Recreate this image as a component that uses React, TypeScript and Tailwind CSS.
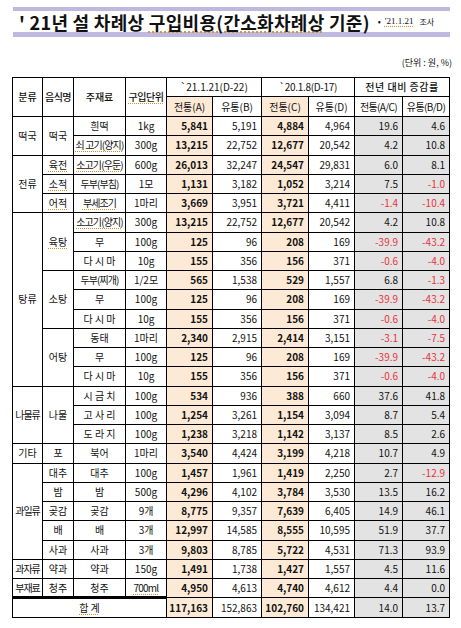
import React from "react";

type Row = {
  cat?: [string, number];
  food?: [string, number, boolean?];
  ing: string;
  ingTight?: boolean;
  ingU?: boolean;
  unit: string;
  v: [string, string, string, string, string, string];
};

const rows: Row[] = [
  { cat: ["떡국", 2], food: ["떡국", 2], ing: "흰떡", unit: "1kg", v: ["5,841", "5,191", "4,884", "4,964", "19.6", "4.6"] },
  { ing: "쇠 고기(양지)", ingTight: true, ingU: true, unit: "300g", v: ["13,215", "22,752", "12,677", "20,542", "4.2", "10.8"] },
  { cat: ["전류", 3], food: ["육전", 1, true], ing: "소고기(우둔)", ingTight: true, ingU: true, unit: "600g", v: ["26,013", "32,247", "24,547", "29,831", "6.0", "8.1"] },
  { food: ["소적", 1, true], ing: "두부(부침)", ingTight: true, unit: "1모", v: ["1,131", "3,182", "1,052", "3,214", "7.5", "-1.0"] },
  { food: ["어적", 1, true], ing: "부세조기", ingTight: true, ingU: true, unit: "1마리", v: ["3,669", "3,951", "3,721", "4,411", "-1.4", "-10.4"] },
  { cat: ["탕류", 9], food: ["육탕", 3, true], ing: "소고기(양지)", ingTight: true, ingU: true, unit: "300g", v: ["13,215", "22,752", "12,677", "20,542", "4.2", "10.8"] },
  { ing: "무", unit: "100g", v: ["125", "96", "208", "169", "-39.9", "-43.2"] },
  { ing: "다 시 마", unit: "10g", v: ["155", "356", "156", "371", "-0.6", "-4.0"] },
  { food: ["소탕", 3], ing: "두부(찌개)", ingTight: true, unit: "1/2모", v: ["565", "1,538", "529", "1,557", "6.8", "-1.3"] },
  { ing: "무", unit: "100g", v: ["125", "96", "208", "169", "-39.9", "-43.2"] },
  { ing: "다 시 마", unit: "10g", v: ["155", "356", "156", "371", "-0.6", "-4.0"] },
  { food: ["어탕", 3], ing: "동태", unit: "1마리", v: ["2,340", "2,915", "2,414", "3,151", "-3.1", "-7.5"] },
  { ing: "무", unit: "100g", v: ["125", "96", "208", "169", "-39.9", "-43.2"] },
  { ing: "다 시 마", unit: "10g", v: ["155", "356", "156", "371", "-0.6", "-4.0"] },
  { cat: ["나물류", 3], food: ["나물", 3], ing: "시 금 치", unit: "100g", v: ["534", "936", "388", "660", "37.6", "41.8"] },
  { ing: "고 사 리", unit: "100g", v: ["1,254", "3,261", "1,154", "3,094", "8.7", "5.4"] },
  { ing: "도 라 지", unit: "100g", v: ["1,238", "3,218", "1,142", "3,137", "8.5", "2.6"] },
  { cat: ["기타", 1], food: ["포", 1], ing: "북어", unit: "1마리", v: ["3,540", "4,424", "3,199", "4,218", "10.7", "4.9"] },
  { cat: ["과일류", 5], food: ["대추", 1], ing: "대추", unit: "100g", v: ["1,457", "1,961", "1,419", "2,250", "2.7", "-12.9"] },
  { food: ["밤", 1], ing: "밤", unit: "500g", v: ["4,296", "4,102", "3,784", "3,530", "13.5", "16.2"] },
  { food: ["곶감", 1], ing: "곶감", unit: "9개", v: ["8,775", "9,357", "7,639", "6,405", "14.9", "46.1"] },
  { food: ["배", 1], ing: "배", unit: "3개", v: ["12,997", "14,585", "8,555", "10,595", "51.9", "37.7"] },
  { food: ["사과", 1], ing: "사과", unit: "3개", v: ["9,803", "8,785", "5,722", "4,531", "71.3", "93.9"] },
  { cat: ["과자류", 1], food: ["약과", 1], ing: "약과", unit: "150g", v: ["1,491", "1,738", "1,427", "1,557", "4.5", "11.6"] },
  { cat: ["부재료", 1], food: ["청주", 1], ing: "청주", unit: "700ml", v: ["4,950", "4,613", "4,740", "4,612", "4.4", "0.0"] },
];

const U = "underline decoration-dotted decoration-[#d9902a] underline-offset-2";
const cell = "border border-black p-0 text-center align-middle whitespace-nowrap";
const peach = "bg-[#fdead6]";
const gray = "bg-[#e3e3e3]";

function Num({ v, cls, bold }: { v: string; cls: string; bold?: boolean }) {
  const red = v.startsWith("-");
  return (
    <td
      className={`border border-black p-0 pr-[4px] text-right align-middle whitespace-nowrap ${cls} ${bold ? "font-bold" : ""} ${red ? "text-[#e8323c]" : "text-[#111]"}`}
    >
      {v}
    </td>
  );
}

export default function App() {
  return (
    <div
      className="w-[461px] h-[628px] bg-white relative text-[#111]"
      style={{ fontFamily: '"Noto Sans CJK KR", "Noto Sans", sans-serif' }}
    >
      <div className="pt-[7px] pl-[13px] w-[450px]">
        <div className="h-[4px] bg-[#bdb9e0]" />
        <div className="h-[21px] flex items-center">
          <span className="ml-[6px] text-[18px] font-bold leading-none tracking-[0.3px]">
            ' 21년 설 차례상 <span className={U}>구입비용(간소화차례상</span> 기준)
          </span>
          <span className="ml-[8px] text-[9px] leading-none flex items-center">
            <span className="mr-[4px]">•</span>
            <span className={U} style={{ fontFamily: '"Liberation Serif", serif' }}>'21.1.21</span>
            <span className="ml-[6px] text-[8px]">조사</span>
          </span>
        </div>
        <div className="h-[5px] bg-[#bdb9e0]" />
      </div>
      <div className="mt-[20px] pr-[9px] text-right text-[9px] leading-[12px]">(단위 : 원, %)</div>
      <table
        className="absolute left-[12px] top-[77px] border-collapse table-fixed text-[10px] leading-none"
        style={{ width: 437 }}
      >
        <colgroup>
          <col style={{ width: 30 }} />
          <col style={{ width: 31 }} />
          <col style={{ width: 52 }} />
          <col style={{ width: 41 }} />
          <col style={{ width: 46 }} />
          <col style={{ width: 49 }} />
          <col style={{ width: 47 }} />
          <col style={{ width: 46 }} />
          <col style={{ width: 48 }} />
          <col style={{ width: 47 }} />
        </colgroup>
        <thead>
          <tr className="h-[19px]">
            <th rowSpan={2} className={`${cell} font-medium`}>분류</th>
            <th rowSpan={2} className={`${cell} font-medium tracking-[-0.5px]`}>음식명</th>
            <th rowSpan={2} className={`${cell} font-medium`}>주재료</th>
            <th rowSpan={2} className={`${cell} font-medium tracking-[-0.5px]`}>
              <span className={U}>구입단위</span>
            </th>
            <th colSpan={2} className={`${cell} font-normal`}>`21.1.21(D-22)</th>
            <th colSpan={2} className={`${cell} font-normal tracking-[-0.3px]`}>`20.1.8(D-17)</th>
            <th colSpan={2} className={`${cell} font-medium tracking-[0.5px]`}>전년 대비 증감률</th>
          </tr>
          <tr className="h-[20px]">
            <th className={`${cell} font-normal ${peach}`}>전통(A)</th>
            <th className={`${cell} font-normal`}>유통(B)</th>
            <th className={`${cell} font-normal ${peach}`}>전통(C)</th>
            <th className={`${cell} font-normal`}>유통(D)</th>
            <th className={`${cell} font-normal tracking-[-0.6px]`}>전통(A/C)</th>
            <th className={`${cell} font-normal tracking-[-0.6px]`}>유통(B/D)</th>
          </tr>
        </thead>
        <tbody>
          {rows.map((r, i) => (
            <tr key={i} className="h-[19.25px]">
              {r.cat && (
                <td rowSpan={r.cat[1]} className={`${cell} ${r.cat[0].length > 2 ? "tracking-[-1px]" : ""}`}>
                  {r.cat[0]}
                </td>
              )}
              {r.food && (
                <td rowSpan={r.food[1]} className={cell}>
                  <span className={r.food[2] ? U : ""}>{r.food[0]}</span>
                </td>
              )}
              <td className={`${cell} ${r.ingTight ? "tracking-[-0.9px]" : ""}`}>
                <span className={r.ingU ? U : ""}>{r.ing}</span>
              </td>
              <td className={`${cell} ${r.unit === "700ml" ? "tracking-[-0.8px]" : ""}`}>
                <span className={r.unit === "700ml" ? U : ""}>{r.unit}</span>
              </td>
              <Num v={r.v[0]} cls={peach} bold />
              <Num v={r.v[1]} cls="" />
              <Num v={r.v[2]} cls={peach} bold />
              <Num v={r.v[3]} cls="" />
              <Num v={r.v[4]} cls={gray} />
              <Num v={r.v[5]} cls={gray} />
            </tr>
          ))}
          <tr className="h-[20px]">
            <td colSpan={4} className={`${cell} border-t-[3px] border-t-double`}>
              <span className={U}>합 계</span>
            </td>
            <Num v="117,163" cls={peach} bold />
            <Num v="152,863" cls="" />
            <Num v="102,760" cls={peach} bold />
            <Num v="134,421" cls="" />
            <Num v="14.0" cls={gray} />
            <Num v="13.7" cls={gray} />
          </tr>
        </tbody>
      </table>
    </div>
  );
}
